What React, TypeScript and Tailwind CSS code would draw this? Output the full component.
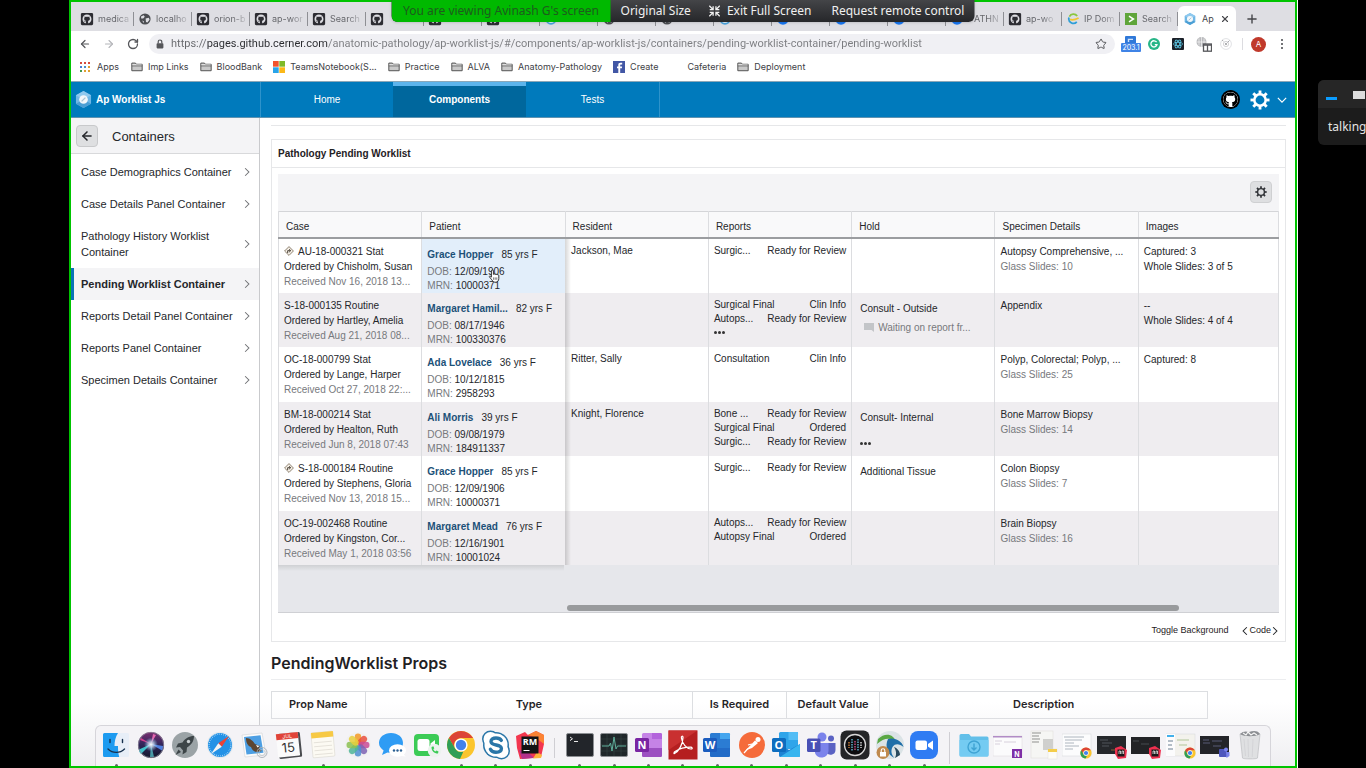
import React from "react";
import { FaGithub, FaGithubSquare } from "react-icons/fa";
import { ArrowLeft, ArrowRight, RotateCw, Star, Lock, X, Plus } from "lucide-react";

/* ---------- small shared icons ---------- */

const TEETH = [0, 45, 90, 135, 180, 225, 270, 315];

function Gear({ className, stroke }: { className: string; stroke: number }) {
  return (
    <svg viewBox="0 0 24 24" className={className} fill="none" stroke="currentColor" aria-hidden="true">
      <circle cx="12" cy="12" r="6.8" strokeWidth={stroke} />
      {TEETH.map((a) => (
        <path key={a} d="M12 5V.6" strokeWidth="3.4" transform={`rotate(${a} 12 12)`} />
      ))}
    </svg>
  );
}

function Chevron({ className }: { className: string }) {
  return (
    <svg viewBox="0 0 8 12" className={className} fill="none" stroke="currentColor" strokeWidth="1.4" aria-hidden="true">
      <path d="M1.5 1l5 5-5 5" />
    </svg>
  );
}

function HexLogo({ className }: { className: string }) {
  return (
    <svg viewBox="0 0 18 18" className={className} aria-hidden="true">
      <path d="M9 0l8 4.4v9.2L9 18l-8-4.4V4.4z" fill="#6fb7e6" />
      <path d="M9 0l8 4.4L9 9 1 4.4z" fill="#8fc9ee" />
      <path d="M1 13.6L9 9l8 4.6L9 18z" fill="#4b9fd4" />
      <circle cx="9" cy="9" r="4.6" fill="#f2f7fa" />
      <path d="M7 11l4-4" stroke="#a9c4d4" strokeWidth="1.4" />
    </svg>
  );
}

function Folder({ className }: { className: string }) {
  return (
    <svg viewBox="0 0 13 11" className={className} aria-hidden="true">
      <path d="M.8 9.6V1.2h4l1 1.3h6.4v7.1z" fill="#c9c9c9" stroke="#555" strokeWidth="1.1" />
      <path d="M.8 4.2h11.4" stroke="#555" strokeWidth="1.1" />
      <path d="M1.3 3.2h10.4" stroke="#f4f4f4" strokeWidth=".9" />
    </svg>
  );
}

function Diamond() {
  return (
    <svg viewBox="0 0 12 12" className="mr-1 inline-block size-[10px] align-[-1px]" aria-hidden="true">
      <path d="M6 .7L11.3 6 6 11.3.7 6z" fill="#f5efe6" stroke="#7a6a58" strokeWidth="1" />
      <path d="M4.4 8.4V5.6h3M6.2 3.9l1.9 1.7-1.9 1.7" fill="none" stroke="#3c342c" strokeWidth="1.1" />
    </svg>
  );
}

/* ---------- browser window ---------- */

type TabKind = "github" | "globe" | "blue" | "ring" | "swirl" | "arrow";

const TABS: { icon: TabKind; label: string }[] = [
  { icon: "github", label: "medica" },
  { icon: "globe", label: "localho" },
  { icon: "github", label: "orion-b" },
  { icon: "github", label: "ap-wor" },
  { icon: "github", label: "Search" },
  { icon: "github", label: "" },
  { icon: "github", label: "" },
  { icon: "github", label: "" },
  { icon: "ring", label: "" },
  { icon: "globe", label: "" },
  { icon: "globe", label: "" },
  { icon: "ring", label: "" },
  { icon: "blue", label: "" },
  { icon: "blue", label: "" },
  { icon: "blue", label: "" },
  { icon: "blue", label: "ATHN" },
  { icon: "github", label: "ap-wo" },
  { icon: "swirl", label: "IP Dom" },
  { icon: "arrow", label: "Search" },
];

function TabIcon({ kind }: { kind: TabKind }) {
  if (kind === "github") return <FaGithubSquare className="size-3.5 shrink-0 text-[#2d2d33]" />;
  if (kind === "globe")
    return (
      <svg viewBox="0 0 12 12" className="mx-px size-3 shrink-0" aria-hidden="true">
        <circle cx="6" cy="6" r="5.6" fill="#4c4e52" />
        <path d="M2 3.4l2.6-1.2 1.2 1.6-1.6 1.6-2 .2zM6.6 5.4l3.2-.6.8 2-2.2 2.8-1.4-.6zM3 7.4l1.8.8.2 2z" fill="#dedee3" />
      </svg>
    );
  if (kind === "blue")
    return (
      <svg viewBox="0 0 12 12" className="mx-px size-3 shrink-0" aria-hidden="true">
        <circle cx="6" cy="6" r="5.8" fill="#1877f2" />
      </svg>
    );
  if (kind === "ring")
    return (
      <svg viewBox="0 0 12 12" className="mx-px size-3 shrink-0" aria-hidden="true">
        <circle cx="6" cy="6" r="4.8" fill="#e9f4fb" stroke="#4aa3dc" strokeWidth="1.8" />
      </svg>
    );
  if (kind === "swirl")
    return (
      <svg viewBox="0 0 12 12" className="mx-px size-3 shrink-0" fill="none" strokeWidth="1.8" aria-hidden="true">
        <path d="M10.2 3A4.6 4.6 0 0 0 2.4 3.6" stroke="#8bc63f" />
        <path d="M2 4.4A4.6 4.6 0 0 0 9.8 8.8" stroke="#2e9fd8" />
        <path d="M3 6.4c2 .8 5 .4 8.6-1.4" stroke="#f1c531" />
      </svg>
    );
  return (
    <svg viewBox="0 0 12 12" className="mx-px size-3 shrink-0" aria-hidden="true">
      <rect width="12" height="12" fill="#5fa53a" />
      <path d="M4 3.2L8.4 6 4 8.8" fill="none" stroke="#fff" strokeWidth="1.5" />
    </svg>
  );
}

function TabStrip() {
  return (
    <div className="flex h-[29px] items-end bg-[#dedee3] pl-[5px] text-[9px] text-[#66676c]">
      {TABS.map((t, i) => (
        <button key={i} type="button" className="flex h-[25px] w-[58px] shrink-0 items-center">
          <span className="flex h-[14px] w-full items-center gap-1 border-r border-[#8e8f94] pl-1">
            <TabIcon kind={t.icon} />
            <span
              className={
                t.label === "ATHN"
                  ? "pl-1.5 whitespace-nowrap [mask-image:linear-gradient(90deg,#000_60%,rgba(0,0,0,0.25))]"
                  : "whitespace-nowrap [mask-image:linear-gradient(90deg,#000_60%,rgba(0,0,0,0.25))]"
              }
            >
              {t.label}
            </span>
          </span>
        </button>
      ))}
      <div className="flex h-[25px] w-[58px] shrink-0 items-center gap-1.5 rounded-t-md bg-white px-1.5 text-[#45464a]">
        <HexLogo className="size-3 shrink-0" />
        <span>Ap</span>
        <button type="button" aria-label="Close tab" className="ml-auto">
          <X className="size-2.5" strokeWidth={2.6} />
        </button>
      </div>
      <button type="button" aria-label="New tab" className="flex h-[25px] w-8 items-center justify-center text-[#45464a]">
        <Plus className="size-3.5" strokeWidth={2.4} />
      </button>
    </div>
  );
}

function AddressBar() {
  return (
    <div className="flex h-[26px] items-center pr-[9px] pl-2 text-[#55565a]">
      <button type="button" aria-label="Back" className="mr-3">
        <ArrowLeft className="size-3" strokeWidth={2.4} />
      </button>
      <button type="button" aria-label="Forward" className="mr-3 text-[#b4b5b9]">
        <ArrowRight className="size-3" strokeWidth={2.2} />
      </button>
      <button type="button" aria-label="Reload" className="mr-2.5">
        <RotateCw className="size-3" strokeWidth={2.6} />
      </button>
      <div className="flex h-5 flex-1 items-center rounded-full bg-[#f0f0f4] pr-2 pl-1.5">
        <svg viewBox="0 0 10 10" className="mr-1.5 size-2.5" aria-hidden="true">
          <rect x="1.6" y="4.2" width="6.8" height="5.2" rx=".8" fill="#55565a" />
          <path d="M3.2 4.4V2.8a1.800 1.800 0 0 1 3.600 0v1.600" fill="none" stroke="#55565a" strokeWidth="1.200" />
        </svg>
        <input
          aria-label="Address"
          readOnly
          value="https://pages.github.cerner.com/anatomic-pathology/ap-worklist-js/#/components/ap-worklist-js/containers/pending-worklist-container/pending-worklist"
          className="min-w-0 flex-1 bg-[linear-gradient(90deg,#66676b_36px,#2b2c30_36px,#2b2c30_157px,#7b7c80_157px)] bg-clip-text font-['Roboto',sans-serif] text-[11px] text-transparent outline-none"
        />
        <button type="button" aria-label="Bookmark this page">
          <Star className="size-3" strokeWidth={2} />
        </button>
      </div>
      <div className="ml-1.5 flex items-center">
        <svg viewBox="0 0 20 18" className="mr-[7px] h-[18px] w-5" aria-hidden="true">
          <rect x="4" y="1" width="11" height="9" rx="1" fill="#2f78d8" />
          <path d="M7.5 7V4.4H12" stroke="#cfe2fb" strokeWidth="1.4" fill="none" />
          <rect x="0" y="8" width="20" height="9" rx="1" fill="#3f83e6" />
          <text x="10" y="15" textAnchor="middle" fontSize="7" fill="#fff" fontFamily="Inter, sans-serif">203.1</text>
        </svg>
        <svg viewBox="0 0 12 12" className="mr-3 size-3" aria-hidden="true">
          <circle cx="6" cy="6" r="6" fill="#27b587" />
          <path d="M8.6 4.2A3.1 3.1 0 1 0 9 6.6H6.8" fill="none" stroke="#fff" strokeWidth="1.3" />
        </svg>
        <svg viewBox="0 0 12 12" className="mr-3 size-3" aria-hidden="true">
          <rect width="12" height="12" rx="1" fill="#1b2028" />
          <g fill="none" stroke="#5ecbea" strokeWidth=".8">
            <ellipse cx="6" cy="6" rx="4.6" ry="1.8" />
            <ellipse cx="6" cy="6" rx="4.6" ry="1.8" transform="rotate(60 6 6)" />
            <ellipse cx="6" cy="6" rx="4.6" ry="1.8" transform="rotate(120 6 6)" />
          </g>
        </svg>
        <svg viewBox="0 0 16 16" className="mr-2 size-4" aria-hidden="true">
          <circle cx="5.5" cy="6" r="5" fill="#b9babd" />
          <path d="M.5 6h10M5.5 1v10M3 2.5v7M8 2.5v7" stroke="#fff" strokeWidth=".6" />
          <rect x="7.5" y="8" width="8" height="7.2" fill="#fff" stroke="#55565a" strokeWidth="1.3" />
          <path d="M7.5 9h8M11.5 9v6" stroke="#55565a" strokeWidth="1.3" />
        </svg>
        <svg viewBox="0 0 12 12" className="mr-2.5 size-3" fill="none" aria-hidden="true">
          <circle cx="6" cy="6" r="5.4" stroke="#dedfe2" strokeWidth=".9" />
          <circle cx="6" cy="6" r="2.6" stroke="#c6c7ca" strokeWidth=".8" />
          <circle cx="6" cy="6" r=".9" fill="#8b8c90" />
          <path d="M7.5 4.5l2-2M2 2l1.4 1.2" stroke="#a8a9ad" />
        </svg>
        <span className="mr-2 h-3 w-px bg-[#dcdce0]" />
        <button type="button" className="mr-3 flex size-[15px] items-center justify-center rounded-full bg-[#c0392b] text-[8px] text-white">
          A
        </button>
        <button type="button" aria-label="Browser menu" className="flex w-2 flex-col items-center gap-[2px]">
          <span className="size-[2px] rounded-full bg-[#45464a]" />
          <span className="size-[2px] rounded-full bg-[#45464a]" />
          <span className="size-[2px] rounded-full bg-[#45464a]" />
        </button>
      </div>
    </div>
  );
}

const APP_DOTS = ["#d64b3e", "#d64b3e", "#d64b3e", "#4a7fd6", "#4a90c8", "#e0a030", "#3f9a52", "#e0a030", "#e0a030"];

function FolderLink({ label }: { label: string }) {
  return (
    <a href="#" className="mr-[11px] flex items-center gap-[5px]">
      <Folder className="h-[10px] w-3" />
      {label}
    </a>
  );
}

function Bookmarks() {
  return (
    <nav className="flex h-6 items-center pb-1 pl-[9px] text-[9px] text-[#404146]">
      <a href="#" className="mr-3 flex items-center gap-[7px]">
        <svg viewBox="0 0 10 10" className="size-2.5" aria-hidden="true">
          {APP_DOTS.map((c, i) => (
            <rect key={i} x={(i % 3) * 4} y={Math.floor(i / 3) * 4} width="2" height="2" fill={c} />
          ))}
        </svg>
        Apps
      </a>
      <FolderLink label="Imp Links" />
      <FolderLink label="BloodBank" />
      <a href="#" className="mr-[11px] flex items-center gap-[5px]">
        <svg viewBox="0 0 12 12" className="size-3" aria-hidden="true">
          <path d="M0 0h5.7v5.7H0z" fill="#f0522d" /><path d="M6.3 0H12v5.7H6.3z" fill="#7eb928" />
          <path d="M0 6.3h5.7V12H0z" fill="#28a4ea" /><path d="M6.3 6.3H12V12H6.3z" fill="#fbb818" />
        </svg>
        TeamsNotebook(S...
      </a>
      <FolderLink label="Practice" />
      <FolderLink label="ALVA" />
      <FolderLink label="Anatomy-Pathology" />
      <a href="#" className="mr-[29px] flex items-center gap-[5px]">
        <svg viewBox="0 0 12 12" className="size-3" aria-hidden="true">
          <rect width="12" height="12" fill="#4257a5" />
          <path d="M7.2 12V7.2h1.7l.2-1.8H7.2V4.3c0-.6.2-.9.9-.9h1.1V1.7H7.6c-1.7 0-2.3.9-2.3 2.3v1.4H4v1.8h1.3V12z" fill="#fff" />
        </svg>
        Create
      </a>
      <a href="#" className="mr-[11px]">Cafeteria</a>
      <FolderLink label="Deployment" />
    </nav>
  );
}

/* ---------- application ---------- */

function AppHeader() {
  return (
    <header className="flex h-[37px] items-stretch border-t border-b border-t-[#8ba7b8] border-b-[#5f93b1] bg-[#007abc] text-[10px] text-white">
      <div className="flex w-[189px] items-center gap-1 pl-1 font-bold">
        <HexLogo className="size-[17px]" />
        Ap Worklist Js
      </div>
      <nav className="flex">
        <a href="#home" className="flex w-[133px] items-center justify-center border-l border-[#2e93cb]">Home</a>
        <a href="#components" className="flex w-[133px] items-center justify-center border-t-4 border-[#5cb4ec] bg-[#00679d] pb-1 font-bold">Components</a>
        <a href="#tests" className="flex w-[134px] items-center justify-center border-r border-[#2e93cb]">Tests</a>
      </nav>
      <div className="ml-auto flex items-center pr-[9px]">
        <a href="#github" aria-label="GitHub" className="mr-2.5 flex size-[19px] items-center justify-center rounded-full bg-black">
          <FaGithub className="size-[15px] rounded-full bg-white text-black" />
        </a>
        <button type="button" aria-label="Settings" className="flex items-center gap-2">
          <Gear className="size-5" stroke={3} />
          <Chevron className="h-2.5 w-2 rotate-90" />
        </button>
      </div>
    </header>
  );
}

const MENU = [
  "Case Demographics Container",
  "Case Details Panel Container",
  "Pathology History Worklist Container",
  "Pending Worklist Container",
  "Reports Detail Panel Container",
  "Reports Panel Container",
  "Specimen Details Container",
];

function Sidebar() {
  return (
    <aside className="w-[189px] shrink-0 border-r border-[#c9cacd] text-[11px] text-[#25272b]">
      <div className="flex h-[36px] items-center gap-3.5 border-b border-[#d8d9db] bg-[#f4f4f6] pt-px pl-[5px]">
        <button type="button" aria-label="Back to menu" className="flex size-[22px] items-center justify-center rounded-sm border border-[#c8c9cb] bg-[#dedfe1]">
          <ArrowLeft className="size-3.5" strokeWidth={2.6} />
        </button>
        <h2 className="pt-0.5 text-[13px]">Containers</h2>
      </div>
      <nav className="pt-0.5">
        {MENU.map((m) => (
          <a
            key={m}
            href="#menu"
            className={
              m.startsWith("Pending")
                ? "flex items-center justify-between border-l-[3px] border-[#0a73b6] bg-[#f4f4f6] py-2 pr-[9px] pl-[7px] leading-4 font-bold"
                : "flex items-center justify-between py-2 pr-[9px] pl-2.5 leading-4"
            }
          >
            <span className="w-[156px]">{m}</span>
            <Chevron className="h-2.5 w-1.5 text-[#6f7174]" />
          </a>
        ))}
      </nav>
    </aside>
  );
}

type Row = {
  flag?: boolean;
  id: string;
  by: string;
  received: string;
  name: string;
  age: string;
  dob: string;
  mrn: string;
  resident?: string;
  reports: [string, string][];
  moreReports?: boolean;
  hold?: string;
  holdNote?: string;
  moreHolds?: boolean;
  specimen: string;
  slides?: string;
  images: string[];
};

const ROWS: Row[] = [
  { flag: true, id: "AU-18-000321 Stat", by: "Chisholm, Susan", received: "Nov 16, 2018 13...", name: "Grace Hopper", age: "85 yrs", dob: "12/09/1906", mrn: "10000371", resident: "Jackson, Mae", reports: [["Surgic...", "Ready for Review"]], specimen: "Autopsy Comprehensive, ...", slides: "10", images: ["Captured: 3", "Whole Slides: 3 of 5"] },
  { id: "S-18-000135 Routine", by: "Hartley, Amelia", received: "Aug 21, 2018 08...", name: "Margaret Hamil...", age: "82 yrs", dob: "08/17/1946", mrn: "100330376", reports: [["Surgical Final", "Clin Info"], ["Autops...", "Ready for Review"]], moreReports: true, hold: "Consult - Outside", holdNote: "Waiting on report fr...", specimen: "Appendix", images: ["--", "Whole Slides: 4 of 4"] },
  { id: "OC-18-000799 Stat", by: "Lange, Harper", received: "Oct 27, 2018 22:...", name: "Ada Lovelace", age: "36 yrs", dob: "10/12/1815", mrn: "2958293", resident: "Ritter, Sally", reports: [["Consultation", "Clin Info"]], specimen: "Polyp, Colorectal; Polyp, ...", slides: "25", images: ["Captured: 8"] },
  { id: "BM-18-000214 Stat", by: "Healton, Ruth", received: "Jun 8, 2018 07:43", name: "Ali Morris", age: "39 yrs", dob: "09/08/1979", mrn: "184911337", resident: "Knight, Florence", reports: [["Bone ...", "Ready for Review"], ["Surgical Final", "Ordered"], ["Surgic...", "Ready for Review"]], hold: "Consult- Internal", moreHolds: true, specimen: "Bone Marrow Biopsy", slides: "14", images: [] },
  { flag: true, id: "S-18-000184 Routine", by: "Stephens, Gloria", received: "Nov 13, 2018 15...", name: "Grace Hopper", age: "85 yrs", dob: "12/09/1906", mrn: "10000371", reports: [["Surgic...", "Ready for Review"]], hold: "Additional Tissue", specimen: "Colon Biopsy", slides: "7", images: [] },
  { id: "OC-19-002468 Routine", by: "Kingston, Cor...", received: "May 1, 2018 03:56", name: "Margaret Mead", age: "76 yrs", dob: "12/16/1901", mrn: "10001024", reports: [["Autops...", "Ready for Review"], ["Autopsy Final", "Ordered"]], specimen: "Brain Biopsy", slides: "16", images: [] },
];

const HEADS = ["Case", "Patient", "Resident", "Reports", "Hold", "Specimen Details", "Images"];

function Dots() {
  return (
    <span className="flex h-[14px] items-center gap-px">
      <span className="size-[3px] rounded-full bg-[#333]" />
      <span className="size-[3px] rounded-full bg-[#333]" />
      <span className="size-[3px] rounded-full bg-[#333]" />
    </span>
  );
}

function HandCursor() {
  return (
    <svg viewBox="0 0 12 14" className="absolute top-[30px] left-[66px] h-3.5 w-3" aria-hidden="true">
      <path
        d="M3.4 8.2V2a1 1 0 0 1 2 0v3.4a1 1 0 0 1 1.8.2 1 1 0 0 1 1.8.4 1 1 0 0 1 1.8.6v2.8c0 2.2-1.2 3.8-3.4 3.8-1.8 0-2.6-.8-3.6-2.4L1.2 7.6c.6-.9 1.5-.5 2.2.6z"
        fill="#fff"
        stroke="#222"
        strokeWidth=".9"
      />
      <path d="M5.6 8.4v2.4M7.2 8.4v2.4M8.8 8.4v2.4" stroke="#222" strokeWidth=".6" />
    </svg>
  );
}

function Worklist() {
  return (
    <table className="w-full table-fixed border-collapse text-left text-[10px] leading-[15px] whitespace-nowrap text-[#25272b]">
      <thead>
        <tr className="h-[26px] border-t border-b-2 border-t-[#d4d5d8] border-b-[#9b9da0] bg-[#f9f9fa]">
          {HEADS.map((h) => (
            <th
              key={h}
              scope="col"
              className={
                h === "Images"
                  ? "border-x border-[#dcdde0] px-[7px] pt-1 font-normal"
                  : "w-[14.33%] border-x border-[#dcdde0] px-[7px] pt-1 font-normal"
              }
            >
              {h}
            </th>
          ))}
        </tr>
      </thead>
      <tbody>
        {ROWS.map((r, i) => (
          <tr key={r.id} className="h-[55px] bg-white align-top even:h-[54px] even:bg-[#efedf0]">
            <td className="border-x border-[#dcdde0] pt-[5px] pl-[5px]">
              {r.flag && <Diamond />}
              {r.id}
              <br />
              Ordered by {r.by}
              <br />
              <span className="text-[#77797d]">Received {r.received}</span>
            </td>
            <td className={i === 0 ? "relative bg-[#e2eefa] pt-2 pl-[5px] leading-[14px]" : "pt-2 pl-[5px] leading-[14px]"}>
              <div className="mb-[3px] leading-[15px]">
                <a href="#patient" className="mr-2 font-bold text-[#1c5178]">{r.name}</a>
                {r.age} F
              </div>
              <span className="text-[#77797d]">DOB:</span> {r.dob}
              <br />
              <span className="text-[#77797d]">MRN:</span> {r.mrn}
              {i === 0 && <HandCursor />}
            </td>
            <td className="border-r border-[#dcdde0] bg-[linear-gradient(90deg,rgba(0,0,0,0.16),transparent)] bg-[length:6px_100%] bg-no-repeat pt-1 pl-1.5">{r.resident}</td>
            <td className="border-r border-[#dcdde0] px-[5px] pt-[5px] leading-[14px]">
              {r.reports.map(([a, b], k) => (
                <div key={k} className="flex justify-between">
                  <span>{a}</span>
                  <span>{b}</span>
                </div>
              ))}
              {r.moreReports && <Dots />}
            </td>
            <td className="border-r border-[#dcdde0] pt-2 pl-2">
              {r.hold}
              {r.holdNote && (
                <div className="flex items-center gap-1 pt-1 pl-1 text-[#77797d]">
                  <svg viewBox="0 0 10 9" className="h-[9px] w-2.5" aria-hidden="true">
                    <path d="M0 0h10v9L7.500 7H0z" fill="#c3c5c8" />
                  </svg>
                  {r.holdNote}
                </div>
              )}
              {r.moreHolds && <div className="pt-3"><Dots /></div>}
            </td>
            <td className="border-r border-[#dcdde0] pt-[5px] pl-[5px]">
              {r.specimen}
              {r.slides && <div className="text-[#77797d]">Glass Slides: {r.slides}</div>}
            </td>
            <td className="border-r border-[#dcdde0] pt-[5px] pl-[5px]">
              {r.images.map((t) => (
                <div key={t}>{t}</div>
              ))}
            </td>
          </tr>
        ))}
      </tbody>
    </table>
  );
}

function Content() {
  return (
    <main className="min-w-0 flex-1 pr-[9px] pl-[11px] text-[#1f2124]">
      <div className="h-2 border-b border-[#e6e7e9]" />
      <section className="mt-[13px] border border-[#e6e7e9]">
        <h3 className="border-b border-[#e6e7e9] px-1.5 py-1.5 text-[10px] leading-[15px] font-bold">Pathology Pending Worklist</h3>
        <div className="px-1.5 pt-1.5">
          <div className="flex h-[37px] items-center justify-end bg-[#f4f4f6] pr-[7px] pb-px">
            <button type="button" aria-label="Table settings" className="flex size-[22px] items-center justify-center rounded-sm border border-[#cfd0d2] bg-[#dedfe1] text-[#303236]">
              <Gear className="size-3" stroke={2.8} />
            </button>
          </div>
          <div className="border-b border-[#cfd0d4] bg-[#e6e7eb]">
            <Worklist />
            <div className="h-1.5 w-2/7 bg-linear-to-b from-black/10 to-transparent" />
            <div className="pt-[34px] pb-px pl-[289px]">
              <div className="h-1.5 w-[86%] rounded-full bg-[#999b9d]" />
            </div>
          </div>
        </div>
        <div className="flex h-7 items-center justify-end gap-3.5 pt-2 pr-[7px] text-[9px]">
          <button type="button">Toggle Background</button>
          <button type="button" className="flex items-center gap-px">
            <Chevron className="h-2.5 w-1.5 rotate-180" />
            Code
            <Chevron className="h-2.5 w-1.5" />
          </button>
        </div>
      </section>
      <h2 className="mt-[9px] border-b border-[#ecedef] pb-1 font-['Inter',sans-serif] text-[16px] leading-6 font-semibold">PendingWorklist Props</h2>
      <table className="mt-[11px] w-[937px] table-fixed border-collapse font-['Inter',sans-serif] text-[11px]">
        <thead>
          <tr className="h-[27px]">
            <th scope="col" className="w-[10%] border border-[#dcdee1] font-semibold">Prop Name</th>
            <th scope="col" className="w-[35%] border border-[#dcdee1] font-semibold">Type</th>
            <th scope="col" className="w-[10%] border border-[#dcdee1] font-semibold">Is Required</th>
            <th scope="col" className="w-[10%] border border-[#dcdee1] font-semibold">Default Value</th>
            <th scope="col" className="w-[35%] border border-[#dcdee1] font-semibold">Description</th>
          </tr>
        </thead>
      </table>
    </main>
  );
}

/* ---------- dock ---------- */

function ChromeShape() {
  return (
    <g>
      <circle cx="15" cy="15" r="14" fill="#fbc52d" />
      <path d="M2.9 8A14 14 0 0 1 27.1 8H15a7 7 0 0 0-6.3 10z" fill="#dc4437" />
      <path d="M2.9 8l6.2 10.6a7 7 0 0 0 8.3 3L14 29A14 14 0 0 1 2.9 8z" fill="#2f9e57" />
      <circle cx="15" cy="15" r="6.6" fill="#fff" />
      <circle cx="15" cy="15" r="5.2" fill="#4381ec" />
    </g>
  );
}

function MiniChrome() {
  return (
    <g transform="translate(18 17) scale(.4)">
      <ChromeShape />
    </g>
  );
}

function MiniRm() {
  return (
    <g>
      <path d="M18 18l6-2 6 4-1 8-8 1-3-5z" fill="#f0304f" />
      <rect x="20.5" y="19.5" width="7" height="7" fill="#1a1a1a" />
      <path d="M22 24v-3h1.5v3M25 24v-3h1.5v3" stroke="#fff" strokeWidth=".7" fill="none" />
    </g>
  );
}

const PETALS: [number, string][] = [
  [0, "#f39a26"], [45, "#ea4f3d"], [90, "#c94c97"], [135, "#7e63b4"],
  [180, "#4f8fd0"], [225, "#4fb598"], [270, "#8cc152"], [315, "#e8cf3c"],
];

type DockItem = { name: string; running?: boolean; art: React.ReactNode };

const officeTile = (letter: string, dark: string, mid: string, light: string) => (
  <g>
    <rect x="8" y="3" width="20" height="24" rx="1.5" fill={mid} />
    <path d="M18 3h8.5a1.5 1.5 0 0 1 1.5 1.5V9H18z" fill={light} />
    <path d="M8 18h20v7.500a1.500 1.500 0 0 1-1.500 1.500H9.500A1.500 1.500 0 0 1 8 25.500z" fill={dark} opacity=".55" />
    <rect x="1" y="8" width="14" height="14" rx="1.500" fill={dark} />
    <text x="8" y="19" textAnchor="middle" fontSize="11" fontWeight="700" fill="#fff" fontFamily="Open Sans, sans-serif">{letter}</text>
  </g>
);

const DOCK_A: DockItem[] = [
  { name: "Finder", running: true, art: (
    <g>
      <rect x="2" y="3" width="26" height="24" rx="1.5" fill="#e7eef7" />
      <path d="M3.5 3H17c-2.500 4-3.500 8.500-3.500 13H17c0 4 .3 7.500 1.200 11H3.500A1.500 1.500 0 0 1 2 25.500v-21A1.500 1.500 0 0 1 3.500 3z" fill="#1d9bf0" />
      <path d="M9 9.500v3M21.500 9.500v3M7 19c4.500 4.500 12 4.500 16.500 0" stroke="#16304d" strokeWidth="1.400" fill="none" strokeLinecap="round" />
    </g>) },
  { name: "Siri", art: (
    <g>
      <defs>
        <linearGradient id="siriBg" x1="0" y1="0" x2="0" y2="1">
          <stop offset="0" stopColor="#7a2f70" />
          <stop offset=".45" stopColor="#35265c" />
          <stop offset="1" stopColor="#11182c" />
        </linearGradient>
        <radialGradient id="siriGlow">
          <stop offset="0" stopColor="#fff" />
          <stop offset=".4" stopColor="#d8ecff" stopOpacity=".7" />
          <stop offset="1" stopColor="#7fc4ea" stopOpacity="0" />
        </radialGradient>
      </defs>
      <circle cx="15" cy="15" r="13" fill="url(#siriBg)" />
      <path d="M15 14L3 19.500c0 2 1 3.500 2 4.500z" fill="#3fc1c9" />
      <path d="M15 14l12 2c0 2-.5 3.500-1 4.500z" fill="#4f7fe0" />
      <path d="M15 14l2-10 3 1z" fill="#e766b0" />
      <path d="M15 14l-1 13h4z" fill="#5fd0d6" opacity=".7" />
      <path d="M15 14L4 10l1-2z" fill="#d4418e" />
      <circle cx="15" cy="14.500" r="7" fill="url(#siriGlow)" />
      <circle cx="15" cy="15" r="12.700" fill="none" stroke="#8e8a99" strokeWidth=".8" />
    </g>) },
  { name: "Launchpad", art: (
    <g>
      <circle cx="15" cy="15" r="13" fill="#9ba3a6" />
      <path d="M24 6c-5 0-9 2.500-11.500 6.500L8 13.500l-2 4 4-.5 3 3.500-.5 4 4-2.500.5-4.500C21.500 15 24 11 24 6z" fill="#3d4548" />
      <path d="M8.500 19.500L5.500 25l5.500-3z" fill="#3d4548" />
      <circle cx="18.500" cy="11.500" r="1.700" fill="#c9cfd1" />
    </g>) },
  { name: "Safari", art: (
    <g>
      <circle cx="15" cy="15" r="13.200" fill="#e4eaef" />
      <circle cx="15" cy="15" r="12" fill="#2392e6" />
      <circle cx="15" cy="15" r="10.800" fill="none" stroke="#cfe8fb" strokeWidth="1.200" strokeDasharray=".6 1.400" />
      <path d="M24 6L13.300 13.200l3.500 3.500z" fill="#ec4335" />
      <path d="M6 24l7.300-10.800 3.500 3.500z" fill="#f4f4f4" />
    </g>) },
  { name: "Mail", art: (
    <g>
      <path d="M3 5l20-2 4 22-21 2z" fill="#fbfbfb" stroke="#c9ccd0" strokeWidth=".5" />
      <path d="M5 7l16.500-1.700 3 17.500-17 1.800z" fill="#4d9fe3" />
      <path d="M7 8c4 0 7 3 9 6l5 2-1 3 3 2-5 1c-3 0-5-2-6-5-3-1-5-4-5-9z" fill="#5d4630" />
      <path d="M17 15l3.500 1-2 1.500z" fill="#fff" />
      <circle cx="23" cy="22.500" r="5" fill="none" stroke="#a9afb6" strokeWidth=".9" />
      <circle cx="23" cy="22.500" r="3" fill="none" stroke="#bcc1c7" strokeWidth=".7" />
    </g>) },
  { name: "Calendar", art: (
    <g transform="rotate(-6 15 15)">
      <rect x="4" y="3" width="23" height="25" rx="1.500" fill="#4a4c50" />
      <rect x="3" y="3" width="22" height="23.500" rx="1" fill="#fbfbfb" />
      <path d="M3 3h22v6H3z" fill="#e04338" />
      <text x="14" y="8" textAnchor="middle" fontSize="5" fill="#fff" fontFamily="Inter, sans-serif">JUL</text>
      <text x="14" y="22" textAnchor="middle" fontSize="13" fill="#333" fontFamily="Inter, sans-serif">15</text>
    </g>) },
  { name: "Notes", running: true, art: (
    <g transform="rotate(-5 15 15)">
      <rect x="4" y="2" width="22" height="25" rx="1" fill="#fcfaf3" stroke="#d5d2c8" strokeWidth=".5" />
      <path d="M4 2h22v5.500H4z" fill="#f7c944" />
      <path d="M6 12h18M6 16h18M6 20h18M6 24h18" stroke="#dcd9d0" strokeWidth=".7" />
    </g>) },
  { name: "Photos", art: (
    <g>
      <circle cx="15" cy="15" r="13" fill="#f1f1f1" />
      {PETALS.map(([a, c]) => (
        <rect key={a} x="11.800" y="3.500" width="6.400" height="11" rx="3.200" fill={c} opacity=".85" transform={`rotate(${a} 15 15)`} />
      ))}
    </g>) },
  { name: "Messages", art: (
    <g>
      <path d="M14 3c7 0 12 4.300 12 10s-5 10-12 10c-1.200 0-2.400-.1-3.500-.4L5 25l1.600-4.600C3.700 18.500 2 16 2 13 2 7.300 7 3 14 3z" fill="#2f9cf4" />
      <ellipse cx="20.500" cy="20.500" rx="8.500" ry="6.200" fill="#fff" />
      <path d="M26 24l3 2.500-5-.5z" fill="#fff" />
      <circle cx="17" cy="20.500" r="1.200" fill="#2b5f93" /><circle cx="20.500" cy="20.500" r="1.200" fill="#2b5f93" /><circle cx="24" cy="20.500" r="1.200" fill="#2b5f93" />
    </g>) },
  { name: "FaceTime", art: (
    <g>
      <rect x="2" y="4" width="25" height="22" rx="4" fill="#3ccb56" />
      <rect x="5.500" y="9" width="12" height="12" rx="2.500" fill="#fff" />
      <path d="M18.500 13.500l4.500-3.500v10l-4.500-3.500z" fill="#fff" />
      <circle cx="22.500" cy="20.500" r="6.800" fill="#ecf3ee" />
      <path d="M19.500 17c0 4 2.500 6.500 6.500 6.500l.5-2-2-1-1.200 1c-1-.5-1.700-1.200-2-2.200l1-1-1-2z" fill="#3ccb56" />
    </g>) },
  { name: "Chrome", running: true, art: <ChromeShape /> },
  { name: "Skype", running: true, art: (
    <g>
      <circle cx="9.500" cy="9" r="8.500" fill="#2a76a8" /><circle cx="20.500" cy="21" r="8.500" fill="#2a76a8" /><circle cx="15" cy="15" r="13" fill="#2a76a8" />
      <circle cx="9.500" cy="9" r="7" fill="#fff" /><circle cx="20.500" cy="21" r="7" fill="#fff" /><circle cx="15" cy="15" r="11.500" fill="#fff" />
      <path d="M20.300 10.400C19.200 8.600 17.200 8 15 8c-3 0-5 1.300-5 3.500 0 5 10.400 2 10.400 7 0 2.300-2.200 3.700-5.400 3.700-2.700 0-4.600-1-5.600-3" fill="none" stroke="#2a76a8" strokeWidth="3.400" strokeLinecap="round" />
    </g>) },
  { name: "RubyMine", running: true, art: (
    <g>
      <path d="M1 6l9-4 3 3 8-4 8 4v9l-3 13-9 1-12 1L2 18z" fill="#f3364f" />
      <path d="M13 5l8-4 8 4v9l-8-6z" fill="#fb8333" />
      <path d="M4 20l3 9 12-1-6-6z" fill="#b5318c" /><path d="M22 22l5 3-1 3-8 .5z" fill="#fdb23b" />
      <rect x="6.500" y="6.500" width="17" height="17" fill="#141414" />
      <text x="15" y="15" textAnchor="middle" fontSize="9" fontWeight="700" fill="#fff" fontFamily="Open Sans, sans-serif">RM</text>
      <path d="M8.500 20.500h6" stroke="#fff" strokeWidth="1.200" />
    </g>) },
];

const DOCK_B: DockItem[] = [
  { name: "Terminal", running: true, art: (
    <g><rect x="1.500" y="3.500" width="27" height="23" rx="1.500" fill="#22252a" stroke="#8b8e92" strokeWidth="1" /><path d="M5 7l2.500 1.800L5 10.600M9 11.500h4" stroke="#e8e8e8" strokeWidth="1" fill="none" /></g>) },
  { name: "Activity Monitor", running: true, art: (
    <g><rect x="1.500" y="3.500" width="27" height="23" rx="1.500" fill="#20272a" stroke="#8b8e92" strokeWidth="1" /><path d="M2 9h26M2 15h26M2 21h26M8 4v22M15 4v22M22 4v22" stroke="#39494a" strokeWidth=".5" /><path d="M3 16h7l1.500-3 1.500 8 2-14 2 12 1.500-3H27" stroke="#5fae9a" strokeWidth="1" fill="none" /></g>) },
  { name: "OneNote", running: true, art: officeTile("N", "#7a26a3", "#c583e6", "#b364dc") },
  { name: "Acrobat", running: true, art: (
    <g><rect x=".5" y=".5" width="29" height="29" fill="#b51f20" /><path d="M.5.5h29L.5 20z" fill="#c93030" /><path d="M6.500 23.500c4-2 8.500-9 8.500-16 0-2-2-1.500-1.600.5 1 6 5 10.500 9.600 11 1.800.2 1.500-1.800-.5-1.800-5 0-11 1.500-15.500 4.300-1.300.9-1.300 2.400-.5 2z" fill="none" stroke="#fff" strokeWidth="1.200" /></g>) },
  { name: "Word", running: true, art: officeTile("W", "#1b5cbe", "#2b7cd3", "#44a5ee") },
  { name: "Postman", running: true, art: (
    <g><circle cx="15" cy="15" r="13" fill="#f56b3b" /><path d="M8.500 20.500L18 10.500l3 2.500-6 5z" fill="#fff" /><path d="M15 14l-4 1M7 23l4-4.500" stroke="#fff" strokeWidth="1.200" fill="none" /><circle cx="21" cy="9.500" r="2.500" fill="#fff" /></g>) },
  { name: "Outlook", running: true, art: (
    <g><rect x="8" y="2" width="19" height="17" rx="1.500" fill="#2fa5ea" /><path d="M17.500 2H27v8h-9.500z" fill="#52bdf5" /><path d="M8 14l10 6 11-6v11.500a1.500 1.500 0 0 1-1.500 1.500h-18A1.500 1.500 0 0 1 8 25.500z" fill="#1d83d4" /><path d="M29 14L9 27h18.500a1.500 1.500 0 0 0 1.500-1.500z" fill="#38b5ef" /><rect x="1" y="8" width="14" height="14" rx="1.500" fill="#0e6dbf" /><text x="8" y="19" textAnchor="middle" fontSize="11" fontWeight="700" fill="#fff" fontFamily="Open Sans, sans-serif">O</text></g>) },
  { name: "Teams", running: true, art: (
    <g><circle cx="16" cy="7" r="4.500" fill="#7b83eb" /><circle cx="25" cy="8.500" r="3" fill="#5a62c3" /><path d="M20 13h9.500v7a5 5 0 0 1-9.500 2z" fill="#5a62c3" /><path d="M9 13h13.500v8a7 7 0 0 1-13.500 2z" fill="#7b83eb" /><rect x="1" y="8.500" width="13.500" height="13.500" rx="1.500" fill="#4850b5" /><text x="7.800" y="19.300" textAnchor="middle" fontSize="11" fontWeight="700" fill="#fff" fontFamily="Open Sans, sans-serif">T</text></g>) },
  { name: "Recorder", running: true, art: (
    <g><rect x=".5" y=".5" width="29" height="29" rx="6" fill="#242527" /><circle cx="15" cy="15" r="10.500" fill="#0d0d0f" stroke="#d6d6d6" strokeWidth="1.300" /><path d="M9 12v6" stroke="#e08a3c" strokeWidth="1.300" strokeDasharray="1.500 1" /><path d="M12 9v12" stroke="#6dc6e8" strokeWidth="1.300" strokeDasharray="1.500 1" /><path d="M15 11v9" stroke="#d9508f" strokeWidth="1.300" strokeDasharray="1.500 1" /><path d="M18 9v12" stroke="#6dc6e8" strokeWidth="1.300" strokeDasharray="1.500 1" /><path d="M21 12v6" stroke="#f0f0f0" strokeWidth="1.300" strokeDasharray="1.500 1" /></g>) },
  { name: "AnyConnect", running: true, art: (
    <g><circle cx="15" cy="15" r="14" fill="#dbe3e6" /><path d="M3 9C10 2 19 4 21 12c-6-5-12-4-19 2z" fill="#5aa845" /><path d="M13 9c7-2 14 2 15.500 8-4-3-8-4-11 0-2 4-1 8 2 11-7-3-10-12-6.500-19z" fill="#1f6ea8" /><path d="M19 17c3 1 6 4 6 8l-5 3c2-4 1-8-1-11z" fill="#2b4a5e" /><circle cx="8" cy="22.500" r="6.500" fill="#c08a4e" /><rect x="5" y="22" width="6" height="4.500" fill="#fff" /><path d="M6.200 22v-1.500a1.800 1.800 0 0 1 3.600 0V22" fill="none" stroke="#fff" strokeWidth="1.100" /></g>) },
  { name: "Zoom", running: true, art: (
    <g><rect x="1" y="1" width="28" height="28" rx="8" fill="#2f7cf3" /><rect x="6.500" y="10.500" width="11.500" height="9.500" rx="2" fill="#fff" /><path d="M19 14l5-3.500v9.500L19 16.500z" fill="#fff" /></g>) },
];

const DOCK_C: DockItem[] = [
  { name: "Downloads", art: (
    <g><path d="M.5 5.500a1.500 1.500 0 0 1 1.500-1.500h8l2 2.500h16a1.500 1.500 0 0 1 1.500 1.500v17a1.500 1.500 0 0 1-1.500 1.500H2A1.500 1.500 0 0 1 .5 25z" fill="#62bfe9" /><path d="M.5 10h29v15a1.500 1.500 0 0 1-1.500 1.500H2A1.500 1.500 0 0 1 .5 25z" fill="#74cbf2" /><circle cx="15" cy="17" r="6" fill="none" stroke="#3fa3d3" strokeWidth="1.400" /><path d="M15 13.500v6M12.500 17.500L15 20l2.500-2.500" stroke="#3fa3d3" strokeWidth="1.400" fill="none" /></g>) },
  { name: "Notebook window", art: (
    <g><rect x="0" y="6" width="29" height="20" fill="#fbfbfc" stroke="#d9d6dc" strokeWidth=".5" /><path d="M0 6h29v1.500H0z" fill="#b18cc6" /><path d="M2 11h7M2 14h5M11 12h12" stroke="#cfc7d4" strokeWidth=".8" /><rect x="19" y="19" width="10" height="9" fill="#7e2fa6" /><text x="24" y="26.500" textAnchor="middle" fontSize="7" fontWeight="700" fill="#fff" fontFamily="Inter, sans-serif">N</text></g>) },
  { name: "Document window", art: (
    <g><rect x="3" y="1" width="22" height="27" fill="#f6f6f4" stroke="#dddcd8" strokeWidth=".5" /><path d="M4 3h9M4 6h7M4 9h8M4 12h7" stroke="#8f8f8d" strokeWidth="1" /><rect x="15" y="9" width="10" height="11" fill="#cfcfcd" /><rect x="20" y="19" width="9" height="10" fill="#fdfcf6" stroke="#ddd" strokeWidth=".4" /><path d="M20 19h9v3h-9z" fill="#f4cd4a" /></g>) },
  { name: "Browser window", art: (
    <g><rect x="0" y="4" width="29" height="22" fill="#fcfcfd" stroke="#d4d5d9" strokeWidth=".5" /><path d="M2 7h20M3 10h17M3 13h9M3 16h14M3 19h8" stroke="#9aa3ad" strokeWidth=".8" /><MiniChrome /></g>) },
  { name: "Editor window", art: (
    <g><rect x="0" y="6" width="29" height="18" fill="#25272b" /><path d="M3 10h8M5 13h10M5 16h7" stroke="#5a6068" strokeWidth=".8" /><path d="M14 20h5" stroke="#a2703a" strokeWidth=".8" /><MiniRm /></g>) },
  { name: "Second editor window", art: (
    <g><rect x="0" y="7" width="29" height="17" fill="#222326" /><path d="M2 11h6M10 14h8" stroke="#50555c" strokeWidth=".8" /><MiniRm /></g>) },
  { name: "Map window", art: (
    <g><rect x="0" y="4" width="29" height="22" fill="#f3f2ed" stroke="#d4d5d9" strokeWidth=".5" /><rect x="0" y="4" width="9" height="22" fill="#fcfcfd" /><path d="M1 6h7" stroke="#43b0ea" strokeWidth="2" /><path d="M2 11h5M2 15h4M2 19h5" stroke="#5b7387" strokeWidth=".9" /><path d="M11 10h12M13 15h8" stroke="#d2dcc3" strokeWidth="2" /><MiniChrome /></g>) },
  { name: "Chat window", art: (
    <g><rect x="0" y="6" width="29" height="18" fill="#232429" /><path d="M3 10h6M3 13h7M12 11h10M13 16h8" stroke="#646a8c" strokeWidth=".8" /><rect x="19" y="19" width="8" height="8" rx="1" fill="#4f57bd" /><circle cx="26" cy="19.500" r="2" fill="#7b83eb" /><path d="M26 22h3.500v4l-3 2z" fill="#7b83eb" /></g>) },
  { name: "Trash", art: (
    <g><path d="M5 4h20l-2.500 24c0 1.200-15 1.200-15 0z" fill="#dfe0e2" stroke="#bcbdc0" strokeWidth=".7" /><path d="M9 9l1.500 17M13 9l.5 18M18 9l-.8 18" stroke="#d0d1d4" strokeWidth=".8" /><path d="M5 4c3-3 6-3 9-2 4-1 8-2 11 2-4 3-16 3-20 0z" fill="#8c8f93" /><path d="M8 3l3 2 2-3 3 3 3-2 3 2" stroke="#f5f5f5" strokeWidth="1.200" fill="none" /></g>) },
];

function DockGroup({ items }: { items: DockItem[] }) {
  return (
    <>
      {items.map((d) => (
        <button key={d.name} type="button" aria-label={d.name} className="flex flex-1 flex-col items-center gap-1">
          <svg viewBox="0 0 30 30" className="size-[30px]" aria-hidden="true">{d.art}</svg>
          {d.running && <span className="size-[3px] rounded-full bg-[#66676b]" />}
        </button>
      ))}
    </>
  );
}

function Dock() {
  return (
    <div className="absolute right-6 bottom-0 left-6 flex h-[41px] items-start overflow-hidden rounded-t-md border border-b-0 border-[#d6d5da] bg-[#f4f3f6] px-[3px] pt-1">
      <DockGroup items={DOCK_A} />
      <span className="mx-[7px] mt-2 h-5 w-px bg-[#cfced3]" />
      <DockGroup items={DOCK_B} />
      <span className="mx-[7px] mt-0.5 h-8 w-px bg-[#cfced3]" />
      <DockGroup items={DOCK_C} />
    </div>
  );
}

/* ---------- meeting overlay ---------- */

function ShareBar() {
  return (
    <div className="absolute top-0 left-1/2 z-20 flex h-[22px] -translate-x-1/2 overflow-hidden rounded-b-md bg-linear-to-b from-[#444548] to-[#26272a] font-['Noto_Sans',sans-serif] text-[12px] whitespace-nowrap text-[#f0f0f0] shadow">
      <span className="flex w-[219px] items-center justify-center bg-[#00b900] text-[#1d5c1d]">You are viewing Avinash G's screen</span>
      <button type="button" className="px-2.5">Original Size</button>
      <button type="button" className="flex items-center gap-1.5 pr-2.5 pl-2">
        <svg viewBox="0 0 12 12" className="size-3" fill="none" stroke="currentColor" strokeWidth="1.300" aria-hidden="true">
          <path d="M.8.8l3.400 3.400M4.600 1.200v3.400H1.200M11.200.8L7.800 4.200M7.400 1.200v3.400h3.400M.8 11.200l3.400-3.400M4.600 10.800V7.400H1.200M11.200 11.200L7.800 7.800M7.400 10.800V7.400h3.400" />
        </svg>
        Exit Full Screen
      </button>
      <button type="button" className="px-2.5">Request remote control</button>
    </div>
  );
}

function TalkingPanel() {
  return (
    <aside className="w-[68px] shrink-0 overflow-hidden pt-20 pl-5 font-['Noto_Sans',sans-serif] text-[12px] text-[#e4e4e4]">
      <div className="overflow-hidden rounded-l-md bg-[#1c1c1c]">
        <div className="flex h-7 items-start justify-between bg-[#262626] pt-[11px] pr-px pl-2">
          <button type="button" aria-label="Minimize" className="mt-1.5 h-[3px] w-[11px] bg-[#0a9cff]" />
          <button type="button" aria-label="Expand" className="h-2 w-3 bg-[#dcdcdc]" />
        </div>
        <p className="h-[37px] pl-2.5 leading-[37px]">talking</p>
      </div>
    </aside>
  );
}

export default function App() {
  return (
    <div className="relative flex h-screen overflow-hidden bg-black pl-[69px] font-['Liberation_Sans',sans-serif]">
      <ShareBar />
      <div className="flex min-w-0 flex-1 border-r border-white">
        <div className="relative flex min-w-0 flex-1 flex-col overflow-hidden border-2 border-[#00c400] bg-white">
          <div className="shrink-0 font-['Inter',sans-serif]">
            <TabStrip />
            <AddressBar />
            <Bookmarks />
          </div>
          <div className="shrink-0">
            <AppHeader />
          </div>
          <div className="flex min-h-0 flex-1">
            <Sidebar />
            <Content />
          </div>
          <div className="absolute inset-x-0 bottom-0 h-16 bg-linear-to-t from-[#e4e3e8] to-transparent opacity-60" />
          <Dock />
        </div>
      </div>
      <TalkingPanel />
    </div>
  );
}
